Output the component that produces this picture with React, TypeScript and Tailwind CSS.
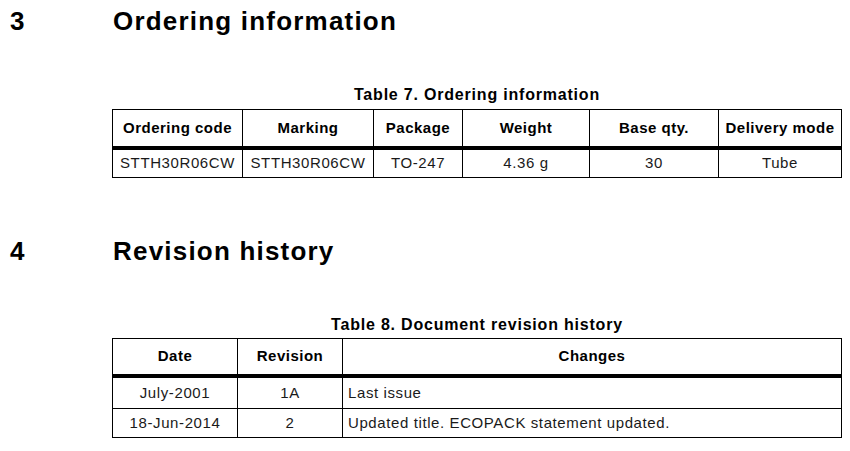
import React from 'react';

type Col = { label: string; w: string };

const orderCols: Col[] = [
  { label: 'Ordering code', w: 'w-[129px]' },
  { label: 'Marking', w: 'w-[131px]' },
  { label: 'Package', w: 'w-[89px]' },
  { label: 'Weight', w: 'w-[127px]' },
  { label: 'Base qty.', w: 'w-[129px]' },
  { label: 'Delivery mode', w: 'w-[123px]' },
];

const orderRow = ['STTH30R06CW', 'STTH30R06CW', 'TO-247', '4.36 g', '30', 'Tube'];

const revCols: Col[] = [
  { label: 'Date', w: 'w-[124px]' },
  { label: 'Revision', w: 'w-[105px]' },
  { label: 'Changes', w: 'w-[499px]' },
];

const revRows = [
  { date: 'July-2001', rev: '1A', changes: 'Last issue', h: 'h-[31px] border-b border-black' },
  { date: '18-Jun-2014', rev: '2', changes: 'Updated title. ECOPACK statement updated.', h: 'h-[28px]' },
];

const Heading: React.FC<{ num: string; title: string; className?: string }> = ({ num, title, className }) => (
  <h2 className={`flex h-[30px] items-center text-[26px] leading-[30px] font-bold tracking-[1.2px] text-black ${className ?? ''}`}>
    <span className="w-[113px] pl-[10px]">{num}</span>
    <span>{title}</span>
  </h2>
);

const Caption: React.FC<{ text: string; className?: string }> = ({ text, className }) => (
  <p className={`w-[730px] ml-[112px] h-[20px] text-center text-[16px] leading-[20px] font-bold tracking-[0.8px] text-black ${className ?? ''}`}>
    {text}
  </p>
);

const App: React.FC = () => {
  return (
    <div className="w-[850px] h-[451px] bg-white pt-[6px] font-['Liberation_Sans',Arial,sans-serif] overflow-hidden">
      {/* Section 3 */}
      <Heading num="3" title="Ordering information" />
      <Caption text="Table 7. Ordering information" className="mt-[49px]" />

      <div className="ml-[112px] mt-[4px] w-[730px] border border-black">
        <div className="flex h-[40px] border-b-4 border-black">
          {orderCols.map((c, i) => (
            <div
              key={c.label}
              className={`${c.w} flex items-center justify-center text-[15px] font-bold tracking-[0.5px] text-black ${i > 0 ? 'border-l border-black' : ''}`}
            >
              {c.label}
            </div>
          ))}
        </div>
        <div className="flex h-[27px]">
          {orderRow.map((v, i) => (
            <div
              key={i}
              className={`${orderCols[i].w} flex items-center justify-center text-[15px] tracking-[0.6px] text-[#1a1a1a] ${i > 0 ? 'border-l border-black' : ''}`}
            >
              {v}
            </div>
          ))}
        </div>
      </div>

      {/* Section 4 */}
      <Heading num="4" title="Revision history" className="mt-[58px]" />
      <Caption text="Table 8. Document revision history" className="mt-[49px]" />

      <div className="ml-[112px] mt-[3px] w-[730px] border border-black">
        <div className="flex h-[39px] border-b-4 border-black">
          {revCols.map((c, i) => (
            <div
              key={c.label}
              className={`${c.w} flex items-center justify-center text-[15px] font-bold tracking-[0.5px] text-black ${i > 0 ? 'border-l border-black' : ''}`}
            >
              {c.label}
            </div>
          ))}
        </div>
        {revRows.map((r) => (
          <div key={r.date} className={`flex ${r.h} text-[15px] tracking-[0.6px] text-[#1a1a1a]`}>
            <div className={`${revCols[0].w} flex items-center justify-center`}>{r.date}</div>
            <div className={`${revCols[1].w} flex items-center justify-center border-l border-black`}>{r.rev}</div>
            <div className={`${revCols[2].w} flex items-center pl-[5px] border-l border-black`}>{r.changes}</div>
          </div>
        ))}
      </div>
    </div>
  );
};

export default App;
